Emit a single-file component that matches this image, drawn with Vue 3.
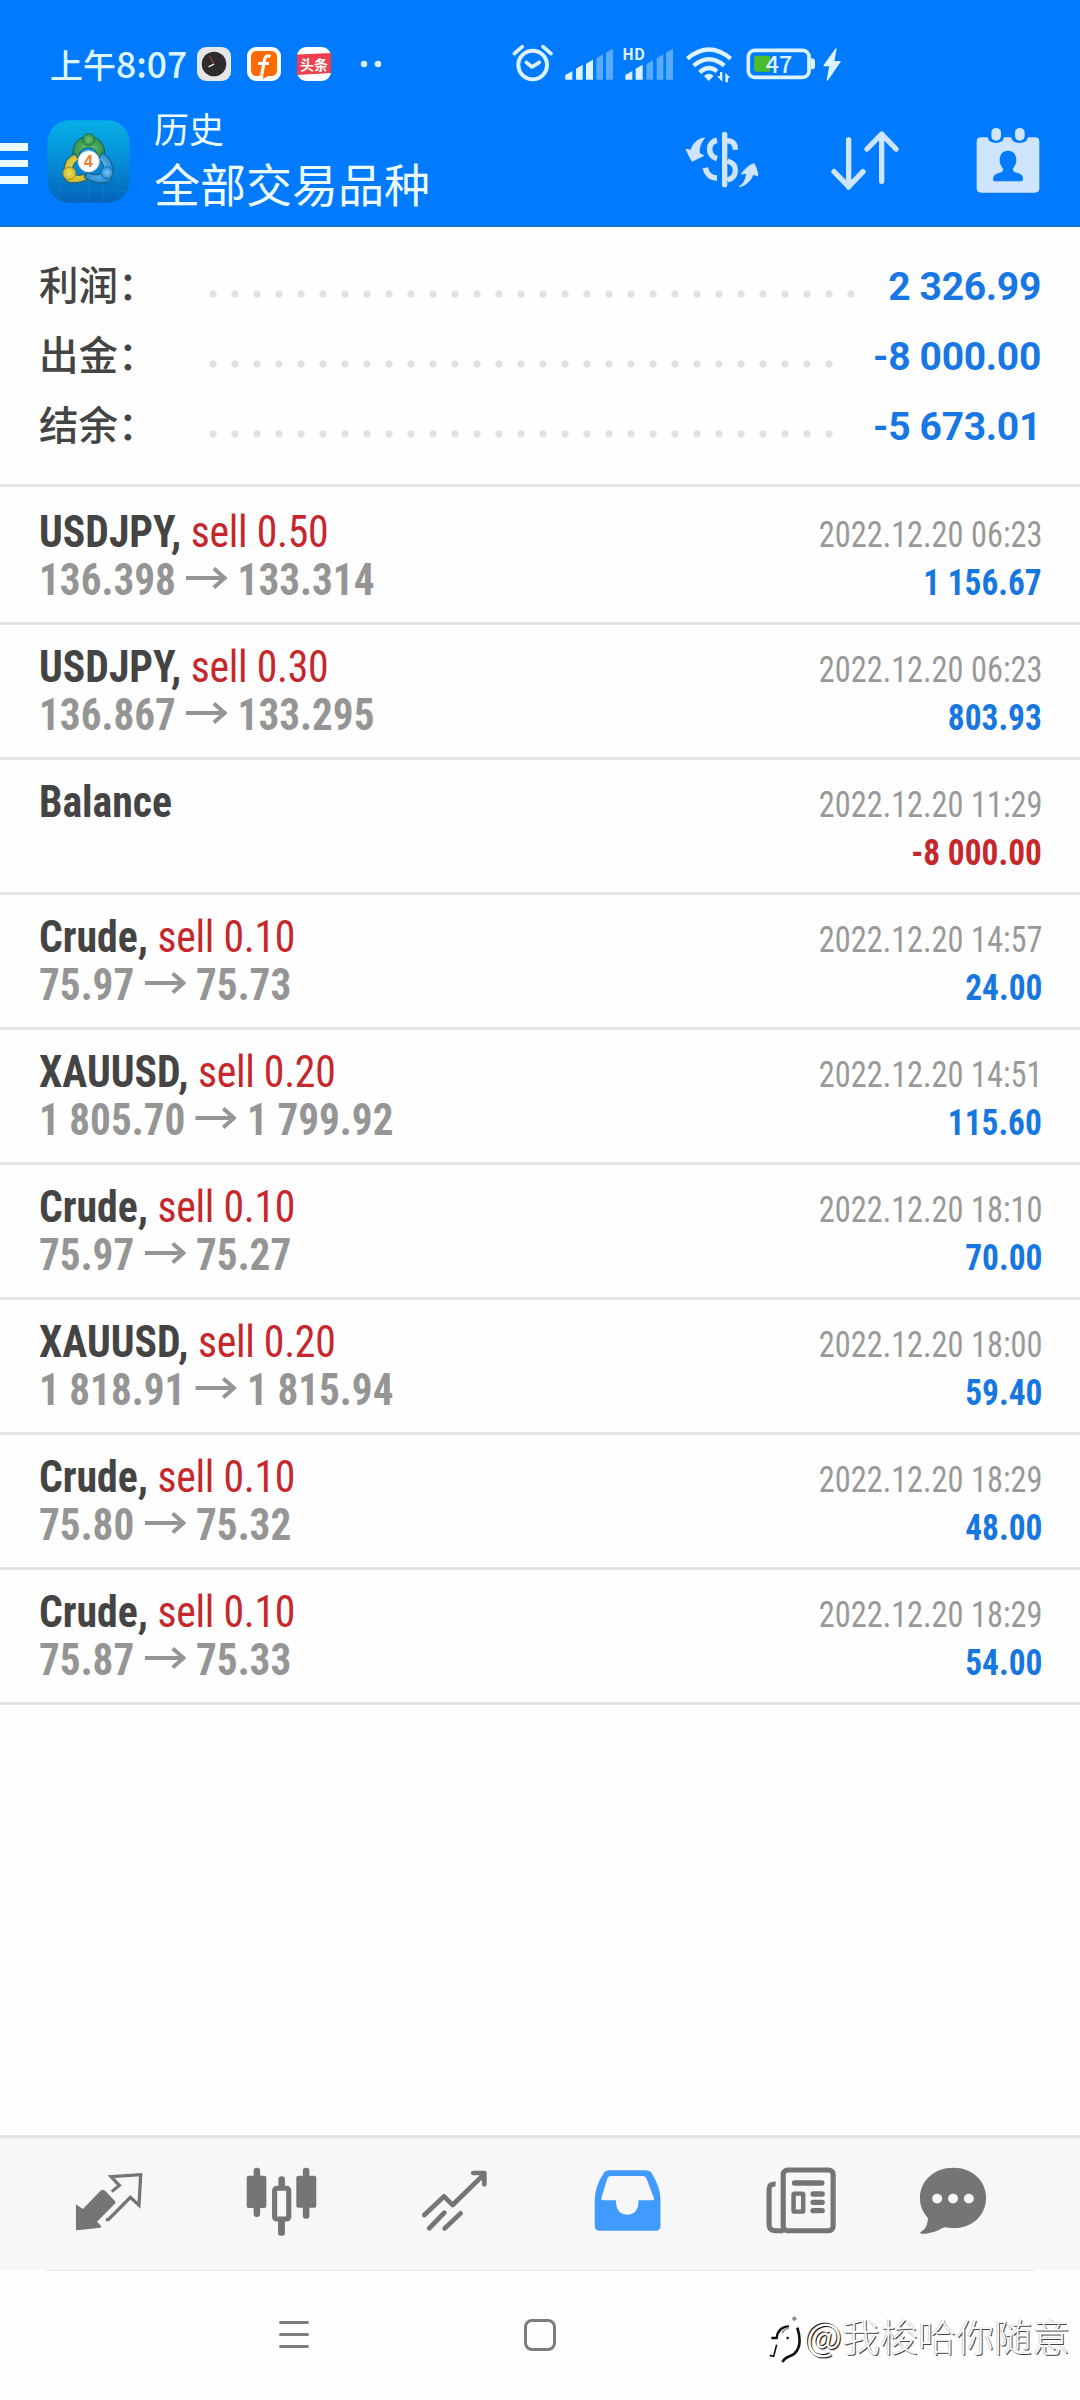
<script setup>
const summary = [
  { label: '利润：', value: '2 326.99', dots: 30 },
  { label: '出金：', value: '-8 000.00', dots: 29 },
  { label: '结余：', value: '-5 673.01', dots: 29 },
]

const deals = [
  { symbol: 'USDJPY', side: 'sell 0.50', from: '136.398', to: '133.314', time: '2022.12.20 06:23', profit: '1 156.67' },
  { symbol: 'USDJPY', side: 'sell 0.30', from: '136.867', to: '133.295', time: '2022.12.20 06:23', profit: '803.93' },
  { symbol: 'Balance', time: '2022.12.20 11:29', profit: '-8 000.00', loss: true },
  { symbol: 'Crude', side: 'sell 0.10', from: '75.97', to: '75.73', time: '2022.12.20 14:57', profit: '24.00' },
  { symbol: 'XAUUSD', side: 'sell 0.20', from: '1 805.70', to: '1 799.92', time: '2022.12.20 14:51', profit: '115.60' },
  { symbol: 'Crude', side: 'sell 0.10', from: '75.97', to: '75.27', time: '2022.12.20 18:10', profit: '70.00' },
  { symbol: 'XAUUSD', side: 'sell 0.20', from: '1 818.91', to: '1 815.94', time: '2022.12.20 18:00', profit: '59.40' },
  { symbol: 'Crude', side: 'sell 0.10', from: '75.80', to: '75.32', time: '2022.12.20 18:29', profit: '48.00' },
  { symbol: 'Crude', side: 'sell 0.10', from: '75.87', to: '75.33', time: '2022.12.20 18:29', profit: '54.00' },
]
</script>

<template>
  <div class="screen">
    <header class="header">
      <div class="status">
        <span class="clock">上午<span class="digits">8:07</span></span>
        <div class="notifications">
          <svg width="34" height="34" viewBox="0 0 34 34">
            <rect width="34" height="34" rx="9" fill="#e4e6e8" />
            <circle cx="17" cy="17" r="12.3" fill="#2d2d2f" />
            <path d="M17 17l-5.5 3" stroke="#fff" stroke-width="1.4" />
            <path d="M17 17l-4.5-8" stroke="#c9403c" stroke-width="1" />
          </svg>
          <svg width="34" height="34" viewBox="0 0 34 34">
            <rect width="34" height="34" rx="9" fill="#fff" />
            <path d="M10 4h14q6 0 6 6v13q0 6-6 6h-3l-5 3 .5-3H10q-6 0-6-6V10q0-6 6-6z" fill="#ff6a00" />
            <path d="M23.5 9.5q-5-2-6 3L15 26.500q-.6 3-1 1M11 16.500h11" fill="none" stroke="#fff" stroke-width="3.200" />
          </svg>
          <svg width="34" height="34" viewBox="0 0 34 34">
            <rect width="34" height="34" rx="9" fill="#fff" />
            <path d="M0 7.500l34-1.500v20l-34 2z" fill="#ee3f4d" />
            <text x="17" y="22.500" text-anchor="middle" class="badge-text">头条</text>
          </svg>
        </div>
        <svg class="more" width="22" height="8" viewBox="0 0 22 8">
          <circle cx="4" cy="4" r="3.200" fill="#d8f0ff" /><circle cx="18" cy="4" r="3.200" fill="#d8f0ff" />
        </svg>
        <svg class="system" width="340" height="64" viewBox="90 10 1020 192" fill="#dcf3ff">
          <circle cx="158" cy="106" r="43" fill="none" stroke="#dcf3ff" stroke-width="12" />
          <path d="M139 98l17 14 22-14M103 72l24-21M189 51l24 21" fill="none" stroke="#dcf3ff" stroke-width="11" stroke-linecap="round" stroke-linejoin="round" />
          <path d="M256 150v-14l21-12v26zM288 150v-33l20-12v45zM318 150v-48l21-12v60z" />
          <path d="M349 150V86l20-12v76zM378 150V69l21-12v93z" opacity=".4" />
          <text x="427" y="90" class="hd">HD</text>
          <path d="M436 150v-14l21-12v26zM467 150v-33l21-12v45z" />
          <path d="M499 150v-46l20-12v58zM530 150V86l20-12v76zM558 150V69l21-12v93z" opacity=".4" />
          <path d="M622 87q65-55 130 0M641 108q46-38 92 0M659 128q27-24 52-3" fill="none" stroke="#dcf3ff" stroke-width="13" />
          <path d="M672 139q15-13 29 0l-15 15zM711 139h9v-12h7v29zM736 129l15 15h-7v14h-8z" />
          <rect x="805" y="62" width="182" height="81" rx="19" fill="none" stroke="#dcf3ff" stroke-width="11" />
          <path d="M829 78h42v48h-42q-7 0-7-7V85q0-7 7-7z" fill="#4cbb2d" />
          <path d="M993 86q12 0 12 9v16q0 8-12 8z" />
          <text x="857" y="129" class="charge">47</text>
          <path d="M1068 58l-36 50h18l-8 43 38-55h-19z" stroke="#dcf3ff" stroke-width="4" stroke-linejoin="round" />
        </svg>
      </div>

      <div class="toolbar">
        <div class="burger"><i></i><i></i><i></i></div>
        <svg class="logo" width="83" height="83" viewBox="0 0 249 249">
          <defs>
            <linearGradient id="sky" x1="0" y1="0" x2="0" y2="1">
              <stop offset="0" stop-color="#06b0e6" /><stop offset=".45" stop-color="#0590d8" /><stop offset="1" stop-color="#0563b8" />
            </linearGradient>
            <radialGradient id="leaf"><stop offset="0" stop-color="#72c476" /><stop offset="1" stop-color="#2f9048" /></radialGradient>
            <radialGradient id="sun"><stop offset="0" stop-color="#f0df54" /><stop offset="1" stop-color="#cdbb31" /></radialGradient>
            <radialGradient id="sea"><stop offset="0" stop-color="#7cc8f5" /><stop offset="1" stop-color="#2b8dd4" /></radialGradient>
          </defs>
          <rect x="1" y="1" width="247" height="247" rx="66" fill="url(#sky)" />
          <path d="M38 10v230M82 2v245M126 2v245M168 2v245M212 10v230M10 35h230M2 78h245M2 122h245M2 168h245M10 213h230" stroke="#42b9e8" stroke-width="2" opacity=".2" />
          <g stroke="#145a65" stroke-width="3">
            <path d="M79 112c-6-35 10-62 46-62s53 28 47 65l-17 8c0-22-12-40-31-40-17 0-28 12-29 30z" fill="url(#leaf)" />
            <path d="M84 102c-28 12-38 36-31 70 3 20 32 21 66 8l-8-17c-18 6-31 4-34-12-2-13 6-26 18-32z" fill="url(#sun)" />
            <path d="M165 98c28 16 38 42 28 78-8 17-44 19-81-3l9-15c20 9 42 10 48-3 5-14-3-30-14-37z" fill="url(#sea)" />
          </g>
          <circle cx="125" cy="59" r="18" fill="url(#leaf)" stroke="#1d7440" stroke-width="3" />
          <circle cx="67" cy="160" r="19" fill="url(#sun)" stroke="#9c922d" stroke-width="3" />
          <circle cx="180" cy="158" r="18" fill="url(#sea)" stroke="#176caa" stroke-width="3" />
          <circle cx="125" cy="124" r="32" fill="#fff" stroke="#b8c8c8" stroke-width="3" />
          <text x="124" y="142" text-anchor="middle" class="logo-digit">4</text>
        </svg>
        <div class="titles">
          <span class="subtitle">历史</span>
          <span class="title">全部交易品种</span>
        </div>
        <div class="actions">
          <svg width="76" height="66" viewBox="72 54 228 198" fill="none" stroke="#cfe4ff" stroke-width="16">
            <path d="M194 73v151" stroke-linecap="round" />
            <path d="M171 91c-28 4-31 46 0 55M136 173c3 17 15 31 35 31" stroke-width="17" />
            <path d="M200 92c17 0 26 8 26 27M202 153c15 4 24 13 24 27 0 18-9 27-24 30" />
            <path d="M134 84c-20 2-35 15-41 37l-15-3 18 36 35-17-13-7c-2-17 4-32 16-46zM237 230c15-7 20-22 23-40l-16 2c9-12 22-27 38-31 6 10 10 21 11 36l-13-4c-8 17-19 33-43 37z" fill="#cfe4ff" stroke="#cfe4ff" stroke-width="3" />
          </svg>
          <svg width="76" height="66" viewBox="501 54 228 198" fill="none" stroke="#cfe4ff" stroke-width="16" stroke-linecap="round" stroke-linejoin="round">
            <path d="M566 89v142M522 185l44 45 43-45M665 214V73M621 117l44-45 43 45" />
          </svg>
          <svg width="76" height="72" viewBox="930 44 228 216" fill="#cfe4ff">
            <path d="M963 81h20q3 17 25 17 21 0 24-17h21q4 17 26 17 22 0 25-17h21q13 0 13 13v140q0 13-13 13H963q-13 0-13-13V94q0-13 13-13z" />
            <rect x="994" y="53" width="29" height="38" rx="14" /><rect x="1065" y="53" width="29" height="38" rx="14" />
            <path d="M1044 121c16 0 25 11 25 29 0 12-6 18-10 25q-2 10 14 13 17 4 16 19 0 6-6 6h-78q-6 0-6-6 0-15 17-19 15-3 13-13c-5-7-10-13-10-25 0-18 9-29 25-29z" fill="#007aff" />
          </svg>
        </div>
      </div>
    </header>

    <section class="summary">
      <div v-for="row in summary" :key="row.label" class="sum-row">
        <span class="sum-label">{{ row.label }}</span>
        <span class="leader" :style="{ width: row.dots * 22 + 'px' }"></span>
        <span class="sum-value">{{ row.value }}</span>
      </div>
    </section>

    <ul class="deals">
      <li v-for="(deal, i) in deals" :key="i" class="deal">
        <div class="line">
          <span class="symbol">{{ deal.symbol }}<template v-if="deal.side">, <span class="side">{{ deal.side }}</span></template></span>
          <span class="time">{{ deal.time }}</span>
        </div>
        <div class="line">
          <span class="prices"><template v-if="deal.from">{{ deal.from }}<svg class="arrow" width="44" height="24" viewBox="0 0 42 24" preserveAspectRatio="none"><path d="M0 12h39M28.500 2.500L39.500 12l-11 9.500" fill="none" stroke="#959595" stroke-width="4" /></svg>{{ deal.to }}</template><template v-else>&nbsp;</template></span>
          <span class="profit" :class="{ loss: deal.loss }">{{ deal.profit }}</span>
        </div>
      </li>
    </ul>

    <nav class="tabs">
      <svg class="tab" viewBox="198.800 130 232.300 240" preserveAspectRatio="none">
        <path d="M219 254l20 14 53-56q5-4 10 0l30 32q4 4 0 8l-52 54 12 13q2 4-2 5l-67 8q-4 0-4-4z" fill="#757575" />
        <path d="M306 300h7l64-67 25 24 5-92-86 6 24 26-22 19" fill="none" stroke="#757575" stroke-width="9.500" />
      </svg>
      <svg class="tab" viewBox="701.300 130 232.300 240" preserveAspectRatio="none" fill="#757575">
        <rect x="735" y="144" width="19" height="148" rx="9" /><rect x="715" y="168" width="57" height="97" rx="6" />
        <rect x="878" y="144" width="19" height="153" rx="9" /><rect x="859" y="168" width="58" height="96" rx="6" />
        <rect x="807" y="170" width="19" height="40" rx="9" /><rect x="806" y="296" width="20" height="52" rx="8" />
        <rect x="796" y="206" width="41" height="92" rx="6" fill="#f7f7f7" stroke="#757575" stroke-width="15" />
      </svg>
      <svg class="tab" viewBox="1203.800 130 232.300 240" preserveAspectRatio="none" fill="none" stroke="#757575" stroke-width="14" stroke-linecap="round" stroke-linejoin="round">
        <path d="M1231 286l57-56 25 26 91-92M1373 160h32v34M1245 326l44-47M1290 326l46-45" />
      </svg>
      <svg class="tab" viewBox="139.500 130 232.300 240" preserveAspectRatio="none">
        <path fill-rule="evenodd" fill="#419bff" d="M201 152h105q13 0 18 8 26 42 26 80v78q0 15-15 15H174q-15 0-15-15v-78q1-41 25-78 6-10 17-10zM206 169q-7 0-10 7l-18 60q-1 6 5 6h38v9q2 33 32 34 30 0 33-34v-9h39q7 0 6-6l-22-60q-3-7-10-7z" />
      </svg>
      <svg class="tab" viewBox="641.500 130 232.300 240" preserveAspectRatio="none" fill="none" stroke="#757575">
        <rect x="706" y="151" width="145" height="182" rx="13" stroke-width="15" />
        <path d="M684 193q-19-1-19 15v107q0 18 20 18h22" stroke-width="15" />
        <path d="M739 190h79M793 223h26M793 248h26M793 273h26" stroke-width="16" stroke-linecap="round" />
        <rect x="736" y="222" width="28" height="54" rx="3" stroke-width="13" />
      </svg>
      <svg class="tab last" viewBox="1082.800 130 232.300 240" preserveAspectRatio="none">
        <path d="M1199 144c56 0 96 39 96 90 0 57-48 99-108 90q-12-3-20 2-20 13-47 16-17 2-16-4c13-8 22-20 22-43-15-17-23-36-23-60 0-52 42-91 96-91z" fill="#757575" />
        <circle cx="1153" cy="237" r="14.500" fill="#f7f7f7" /><circle cx="1199" cy="237" r="14.500" fill="#f7f7f7" /><circle cx="1245" cy="237" r="14.500" fill="#f7f7f7" />
      </svg>
    </nav>

    <div class="sysnav">
      <div class="recents"><i></i><i></i><i></i></div>
      <div class="home"></div>
      <div class="author">
        <svg width="36" height="50" viewBox="0 0 108 150" fill="none" stroke="#111" stroke-width="6">
          <path d="M13 66h16c2-20 13-34 37-35" stroke-width="7" />
          <path d="M29 86l-9 35-12-3" stroke-width="5" />
          <path d="M91 35c10 32 10 60-8 77-9 9-22 9-31 18l-6 8" stroke-width="8" />
          <path d="M46 52q4-14 20-16" stroke="#999" stroke-width="6" /><circle cx="62" cy="66" r="3" fill="#111" stroke-width="2" />
          <path d="M78 12l8-8" stroke="#888" stroke-width="11" />
        </svg>
        <span><b>@</b>我梭哈你随意</span>
      </div>
    </div>
  </div>
</template>

<style>
body {
  background: #fefefe;
}
</style>

<style scoped>
.screen {
  width: 1080px;
  height: 2400px;
  display: flex;
  flex-direction: column;
  background: #fefefe;
  overflow: hidden;
  font-family: Roboto, "Noto Sans CJK SC", sans-serif;
}
svg { display: block; flex: none; }

.header {
  height: 227px;
  flex: none;
  box-sizing: border-box;
  background: #007aff;
  border-bottom: 2px solid #1873d2;
  color: #edfcff;
  font-family: "Noto Sans CJK SC", sans-serif;
}
.status {
  height: 106px;
  padding-top: 22px;
  box-sizing: border-box;
  display: flex;
  align-items: center;
  padding-left: 50px;
}
.clock {
  width: 147px;
  margin-top: -2px;
  font-size: 33px;
  line-height: 40px;
  font-weight: 500;
  color: #dcf5ff;
  white-space: nowrap;
}
.digits { font-size: 35.500px; }
.notifications { display: flex; gap: 16px; }
.badge-text { font: 700 14px "Noto Sans CJK SC", sans-serif; fill: #fff; }
.more { margin-left: 29px; }
.system { margin-left: 128px; margin-top: 2px; }
.hd { font: 700 46px "Noto Sans CJK SC", sans-serif; }
.charge { font: 500 70px "Noto Sans CJK SC", sans-serif; }

.toolbar {
  height: 119px;
  display: flex;
  align-items: flex-start;
}
.burger {
  width: 28px;
  margin-top: 37px;
  display: flex;
  flex-direction: column;
  gap: 9px;
}
.burger i { height: 7.500px; background: #e9fbff; }
.logo { margin: 14px 0 0 19px; }
.logo-digit { font: 700 50px "Liberation Sans", sans-serif; fill: #f08032; }
.titles {
  margin: 1px 0 0 24px;
  display: flex;
  flex-direction: column;
}
.subtitle { font-size: 35px; line-height: 42px; }
.title { font-size: 46px; line-height: 67px; }
.actions {
  flex: 1;
  display: flex;
  justify-content: flex-end;
  padding: 22px 34px 0 0;
}
.actions svg + svg { margin-left: 67px; }
.actions svg:last-child { margin-top: -3px; }

.summary {
  height: 260px;
  flex: none;
  box-sizing: border-box;
  padding: 24px 39px 0;
  border-bottom: 3px solid #e4e4e4;
}
.sum-row {
  height: 70px;
  display: flex;
  align-items: center;
}
.sum-label {
  width: 163px;
  font: 500 39.500px/70px "Noto Sans CJK SC", sans-serif;
  margin-top: -6px;
  color: #444;
}
.leader {
  height: 8px;
  margin-top: 15px;
  background: radial-gradient(circle at 11px 4px, #e0e0e0 3.200px, transparent 4px) 0 0 / 22px 8px repeat-x;
}
.sum-value {
  margin-left: auto;
  margin-top: 2px;
  font-size: 39px;
  font-weight: 700;
  letter-spacing: -.3px;
  color: #1777e4;
  white-space: nowrap;
}

.deals {
  list-style: none;
  margin: 3px 0 0;
  padding: 0;
  font-family: "Roboto Condensed", Roboto, sans-serif;
}
.deal {
  height: 135px;
  box-sizing: border-box;
  padding: 18px 38px 0 39px;
  border-bottom: 3px solid #e4e4e4;
}
.line {
  height: 48px;
  line-height: 48px;
  display: flex;
  justify-content: space-between;
  align-items: baseline;
  white-space: nowrap;
}
/* The face is narrower than Roboto Condensed's own minimum width. */
.symbol, .prices { font-size: 44px; font-weight: 700; transform-origin: left; }
.symbol { color: #444; transform: scaleX(.948); }
.side { font-weight: 400; color: #c5272c; letter-spacing: -.3px; }
.prices { color: #959595; transform: scaleX(.936); }
.arrow { display: inline-block; vertical-align: 5px; margin: 0 11px 0 11px; }
.time, .profit { font-size: 36.500px; transform-origin: right; }
.time { color: #999; transform: scaleX(.886); }
.profit { font-weight: 700; color: #1777e0; transform: scaleX(.914); }
.profit.loss { color: #c5272c; }

.tabs {
  height: 135px;
  flex: none;
  box-sizing: border-box;
  margin-top: auto;
  padding: 25px 0 0 22px;
  display: flex;
  border-top: 3px solid #e4e4e4;
  background: #f7f7f7;
}
.tab { width: 80px; height: 80px; margin: 0 46.500px; }
.tab.last { margin: 0 26px; }

.sysnav {
  height: 130px;
  flex: none;
  display: flex;
  align-items: flex-start;
  background: linear-gradient(#e6e6e6, #e6e6e6) 46px 0 / 988px 1px no-repeat;
}
.recents {
  margin: 51px 0 0 279px;
  width: 30px;
  display: flex;
  flex-direction: column;
  gap: 9px;
}
.recents i { height: 3px; border-radius: 2px; background: #7d7d7d; }
.home {
  margin: 49px 0 0 215px;
  width: 32px;
  height: 32px;
  box-sizing: border-box;
  border: 3px solid #7d7d7d;
  border-radius: 8px;
}
.author {
  margin-left: 211px;
  margin-top: 46px;
  display: flex;
}
.author span {
  margin-left: 3px;
  font: 300 38px/52px "Noto Sans CJK SC", sans-serif;
  color: #fff;
  text-shadow: 1px 1px .5px #444, -.5px -.5px .5px #aaa;
  white-space: nowrap;
  margin-top: -7px;
}
.author b { font-weight: 400; text-shadow: 1px 1px 1px #000, -1px -1px 0 #222; }
</style>
